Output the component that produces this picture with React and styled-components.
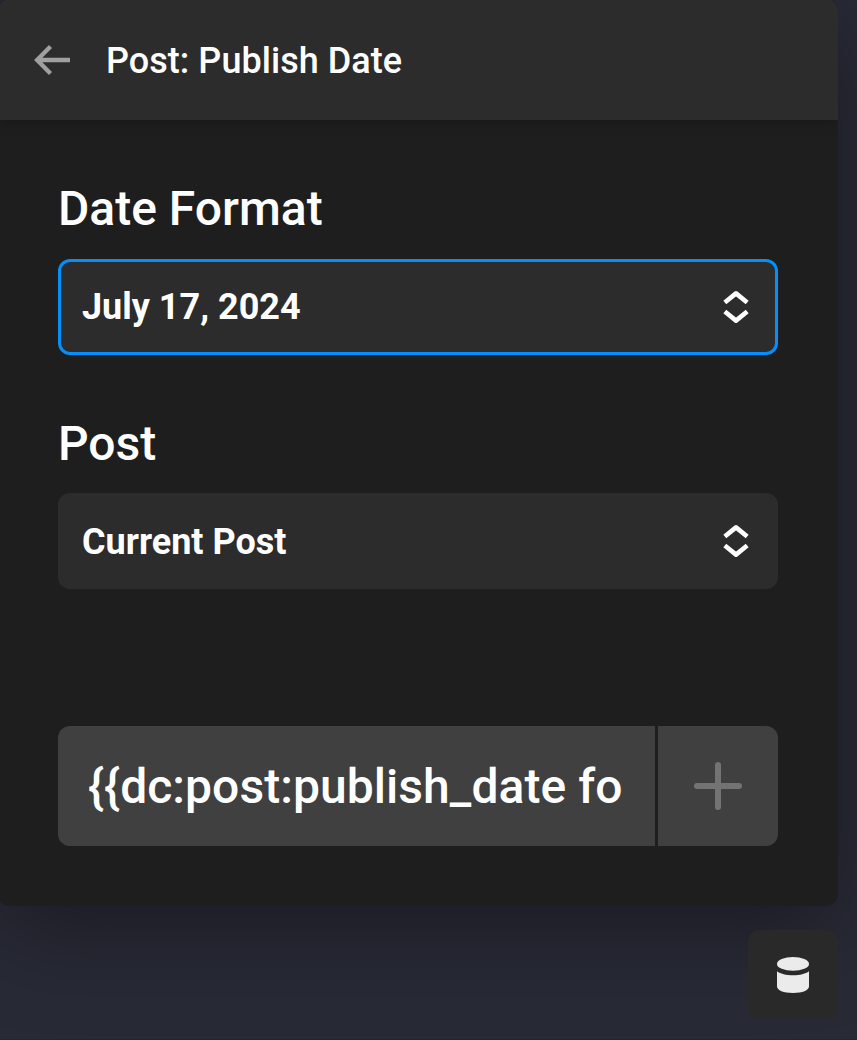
import React from "react";
import styled, { createGlobalStyle } from "styled-components";

const FIELDS = [
  { label: "Date Format", value: "July 17, 2024", active: true },
  { label: "Post", value: "Current Post", active: false },
];

function App() {
  return (
    <Page>
      <GlobalStyle />
      <Panel>
        <Header>
          <BackButton type="button" aria-label="Back">
            <BackIcon />
          </BackButton>
          <Title>Post: Publish Date</Title>
        </Header>
        <Content>
          {FIELDS.map((field) => (
            <SelectField key={field.label} {...field} />
          ))}
          <TagRow>
            <TagText>{"{{dc:post:publish_date fo"}</TagText>
            <AddButton type="button" aria-label="Add">
              <PlusIcon />
            </AddButton>
          </TagRow>
        </Content>
      </Panel>
      <Footer>
        <DataButton type="button" aria-label="Dynamic data">
          <DataIcon />
        </DataButton>
      </Footer>
    </Page>
  );
}

const SelectField = (props) => {
  return (
    <Field>
      <Label $active={props.active}>{props.label}</Label>
      <Select type="button" $active={props.active}>
        <Value $active={props.active}>{props.value}</Value>
        <ChevronsIcon />
      </Select>
    </Field>
  );
};

const BackIcon = () => (
  <svg width="38" height="32" viewBox="0 0 38 32" fill="none">
    <path
      d="M17.5 2.6 4.1 16l13.4 13.4M4.1 16H37"
      stroke="#a0a0a0"
      strokeWidth="4.3"
    />
  </svg>
);

const ChevronsIcon = () => (
  <svg width="26" height="34" viewBox="0 0 26 34" fill="none">
    <path
      d="M1.8 12.5 13 3.4l11.2 9.1M1.8 21.5 13 30.6l11.2-9.1"
      stroke="#fff"
      strokeWidth="4.6"
      strokeLinejoin="round"
    />
  </svg>
);

const PlusIcon = () => (
  <svg width="48" height="48" viewBox="0 0 48 48" fill="none">
    <path
      d="M24 3v42M3 24h42"
      stroke="#737373"
      strokeWidth="6"
      strokeLinecap="round"
    />
  </svg>
);

const DataIcon = () => (
  <svg width="32" height="36" viewBox="0 0 32 36" fill="#ebebeb">
    <ellipse cx="16" cy="6.9" rx="16" ry="6.9" />
    <path d="M0 14.2c3.4 2.5 9 4 16 4s12.6-1.5 16-4V29.5c0 3.7-6.5 6.5-16 6.5S0 33.2 0 29.5z" />
  </svg>
);

const GlobalStyle = createGlobalStyle`
  * {
    box-sizing: border-box;
  }

  body {
    margin: 0;
    background: #282a36;
    font-family: Roboto, "Liberation Sans", sans-serif;
    overflow: hidden;
  }

  button {
    border: none;
    padding: 0;
    font-family: inherit;
  }

  svg {
    display: block;
    flex-shrink: 0;
  }
`;

const Page = styled.div`
  width: 857px;
  height: 1040px;
  display: flow-root;
  background: #282a36;
  border-bottom: 1px solid #2b2030;
  overflow: hidden;
`;

const Panel = styled.section`
  width: 840px;
  height: 907px;
  margin: -1px 0 0 -2px;
  border-radius: 12px;
  background: #1e1e1e;
  box-shadow: 0 24px 96px rgba(0, 0, 0, 0.36);
  overflow: hidden;
`;

const Header = styled.header`
  height: 121px;
  padding: 1px 0 0 35px;
  display: flex;
  align-items: center;
  gap: 35px;
  background: #2c2c2c;
  box-shadow: 0 3px 12px rgba(0, 0, 0, 0.2);
`;

const BackButton = styled.button`
  background: none;
`;

const Title = styled.h1`
  margin: 0;
  padding-top: 2px;
  color: #fff;
  font-size: 36px;
  font-weight: 500;
  line-height: 42px;
  letter-spacing: 0.04px;
`;

const Content = styled.div`
  padding: 60px;
`;

const Field = styled.div`
  margin-bottom: 60px;
`;

const Label = styled.div`
  height: 57px;
  margin-bottom: ${(props) => (props.$active ? "22px" : "21px")};
  color: #fff;
  font-size: 48px;
  font-weight: 500;
  line-height: 57px;
`;

const Select = styled.button`
  width: 100%;
  height: 96px;
  padding: 0 26px 0 21px;
  display: flex;
  align-items: center;
  justify-content: space-between;
  border: 3px solid ${(props) => (props.$active ? "#048ffa" : "#2c2c2c")};
  border-radius: 12px;
  background: #2c2c2c;
  color: #fff;
  font-size: 36px;
  font-weight: 700;
`;

const Value = styled.span`
  padding-top: ${(props) => (props.$active ? "0" : "2px")};
`;

const TagRow = styled.div`
  height: 120px;
  margin-top: 137px;
  display: grid;
  grid-template-columns: 597px 120px;
  gap: 3px;
  border-radius: 12px;
  overflow: hidden;
`;

const TagText = styled.div`
  padding: 1px 0 0 30px;
  background: #404040;
  color: #fff;
  font-size: 48px;
  font-weight: 500;
  letter-spacing: 0.06px;
  line-height: 120px;
  white-space: nowrap;
  overflow: hidden;
`;

const AddButton = styled.button`
  display: flex;
  align-items: center;
  justify-content: center;
  background: #404040;
`;

const Footer = styled.div`
  width: 838px;
  padding-top: 24px;
  display: flex;
  justify-content: flex-end;
`;

const DataButton = styled.button`
  width: 90px;
  height: 90px;
  display: flex;
  align-items: center;
  justify-content: center;
  border-radius: 12px;
  background: #292929;
`;

export default App;
